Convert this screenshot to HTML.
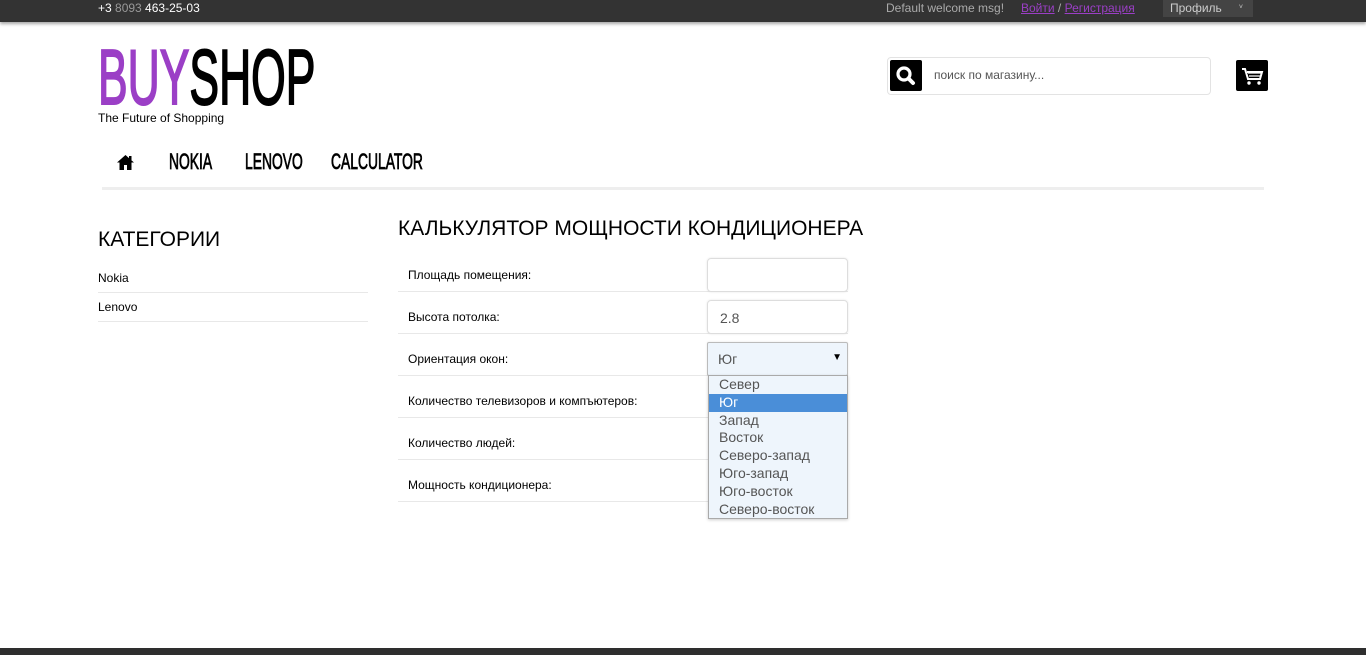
<!DOCTYPE html>
<html><head><meta charset="utf-8"><style>
*{box-sizing:border-box;margin:0;padding:0}
body{width:1366px;height:655px;overflow:hidden;background:#fff;font-family:"Liberation Sans","DejaVu Sans",sans-serif;position:relative;color:#000}
.abs{position:absolute}
.top{left:0;top:0;width:1366px;height:22px;background:#333;box-shadow:0 2px 3px rgba(0,0,0,.35);font-size:12px;color:#fff}
.logo{left:98px;top:38px;font-size:78px;font-weight:normal;transform:scaleX(.57);transform-origin:left top;line-height:78px;white-space:nowrap;-webkit-text-stroke:2px currentColor}
.nav{top:148px;font-size:22px;font-weight:normal;transform:scaleX(.63);transform-origin:left top;white-space:nowrap;line-height:28px;-webkit-text-stroke:.8px #000}
.row{left:398px;width:450px;height:42px;border-bottom:1px solid #e8e8e8;font-size:12px}
.row span{position:absolute;left:10px;top:18px}
.inp{left:707px;width:141px;height:34px;border:1px solid #ddd;border-radius:4px;box-shadow:0 0 2px rgba(0,0,0,.1);font-size:14px;color:#555;padding:9px 12px}
.opt{height:17.8px;line-height:17.8px;padding-left:10px;font-size:14px;color:#555}
</style></head><body>
<div class="abs top">
 <div class="abs" style="left:98px;top:1px">+3 <span style="color:#999">8093</span> 463-25-03</div>
 <div class="abs" style="left:886px;top:1px;color:#aaa">Default welcome msg!</div>
 <div class="abs" style="left:1021px;top:1px;color:#aaa"><u style="color:#9b3fc6">Войти</u> / <u style="color:#9b3fc6">Регистрация</u></div>
 <div class="abs" style="left:1163px;top:0;width:90px;height:17px;background:#444;color:#ccc;padding:1px 7px">Профиль<span style="position:absolute;right:10px;font-size:7px;top:4px">˅</span></div>
</div>
<div class="abs logo"><span style="color:#9b3fc6">BUY</span>SHOP</div>
<div class="abs" style="left:98px;top:111px;font-size:12px">The Future of Shopping</div>
<div class="abs" style="left:887px;top:57px;width:324px;height:38px;border:1px solid #e3e3e3;border-radius:4px;background:#fff"></div>
<div class="abs" style="left:890px;top:60px;width:32px;height:31px;background:#000;border-radius:2px">
<svg width="32" height="31" viewBox="0 0 32 31"><circle cx="14" cy="14" r="6" fill="none" stroke="#fff" stroke-width="3.2"/><line x1="18.5" y1="18.5" x2="23" y2="23" stroke="#fff" stroke-width="4" stroke-linecap="round"/></svg></div>
<div class="abs" style="left:934px;top:68px;font-size:12px;color:#555">поиск по магазину...</div>
<div class="abs" style="left:1236px;top:60px;width:32px;height:31px;background:#000;border-radius:2px">
<svg width="32" height="31" viewBox="0 0 32 31"><path d="M6 9h3l3 10h12l2-7H11" fill="none" stroke="#fff" stroke-width="2"/><path d="M12 13h13M13 16h11" stroke="#fff" stroke-width="1.2"/><circle cx="13" cy="23" r="1.7" fill="#fff"/><circle cx="23" cy="23" r="1.7" fill="#fff"/></svg></div>
<svg class="abs" style="left:116px;top:154px" width="19" height="16" viewBox="0 0 19 16"><path d="M9.5 1L1 8.5h2.5V16h4.5v-5h3v5h4.5V8.5H18z" fill="#000"/><rect x="13" y="2" width="2.5" height="4" fill="#000"/></svg>
<div class="abs nav" style="left:169px">NOKIA</div>
<div class="abs nav" style="left:245px">LENOVO</div>
<div class="abs nav" style="left:331px">CALCULATOR</div>
<div class="abs" style="left:102px;top:187px;width:1162px;height:3px;background:#eee"></div>
<div class="abs" style="left:98px;top:228px;font-size:21px">КАТЕГОРИИ</div>
<div class="abs" style="left:98px;top:264px;width:270px;height:29px;border-bottom:1px solid #e8e8e8;font-size:12px;padding-top:7px">Nokia</div>
<div class="abs" style="left:98px;top:293px;width:270px;height:29px;border-bottom:1px solid #e8e8e8;font-size:12px;padding-top:7px">Lenovo</div>
<div class="abs" style="left:398px;top:217px;font-size:21px;white-space:nowrap">КАЛЬКУЛЯТОР МОЩНОСТИ КОНДИЦИОНЕРА</div>
<div class="abs row" style="top:250px"><span>Площадь помещения:</span></div>
<div class="abs row" style="top:292px"><span>Высота потолка:</span></div>
<div class="abs row" style="top:334px"><span>Ориентация окон:</span></div>
<div class="abs row" style="top:376px"><span>Количество телевизоров и компъютеров:</span></div>
<div class="abs row" style="top:418px"><span>Количество людей:</span></div>
<div class="abs row" style="top:460px"><span>Мощность кондиционера:</span></div>
<div class="abs inp" style="top:258px"></div>
<div class="abs inp" style="top:300px">2.8</div>
<div class="abs inp" style="top:342px;background:#eef5fc;border-radius:2px;border-color:#bbb;padding:8px 10px">Юг<span style="position:absolute;right:5px;top:9px;font-size:10px;color:#000">▼</span></div>
<div class="abs" style="left:708px;top:375px;width:140px;height:144px;background:#eef5fc;border:1px solid #aaa;box-shadow:0 1px 3px rgba(0,0,0,.2)">
<div class="opt">Север</div><div class="opt" style="background:#4a8ed8;color:#fff">Юг</div><div class="opt">Запад</div><div class="opt">Восток</div><div class="opt">Северо-запад</div><div class="opt">Юго-запад</div><div class="opt">Юго-восток</div><div class="opt">Северо-восток</div>
</div>
<div class="abs" style="left:0;top:648px;width:1366px;height:7px;background:#2e2e2e"></div>
</body></html>
